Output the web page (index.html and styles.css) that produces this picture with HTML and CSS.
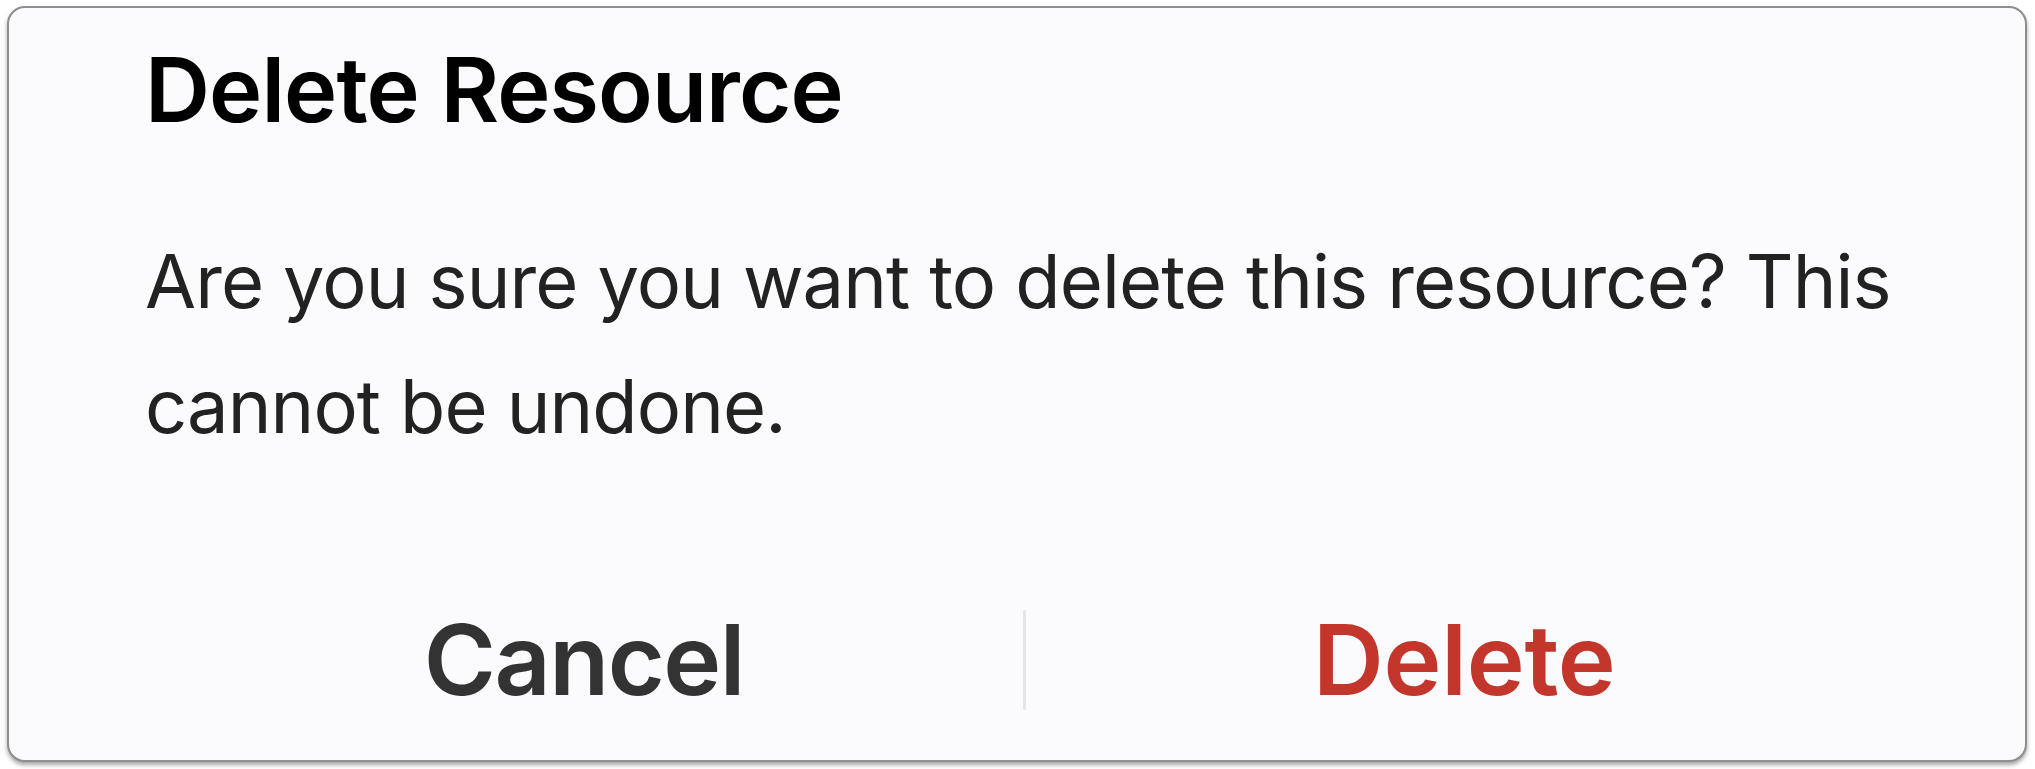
FILE: index.html
```html
<!DOCTYPE html>
<html lang="en">
<head>
    <meta charset="UTF-8">
    <meta name="viewport" content="width=device-width, initial-scale=1.0">
    <title>Delete Resource</title>
    <link rel="stylesheet" href="styles.css">
</head>
<body>
    <div class="dialog" role="alertdialog" aria-labelledby="dialogTitle">
        <h1 id="dialogTitle">Delete Resource</h1>
        <p class="message">Are you sure you want to delete this resource? This cannot be undone.</p>
        <div class="actions">
            <button type="button" class="btn-cancel">Cancel</button>
            <span class="divider"></span>
            <button type="button" class="btn-delete">Delete</button>
        </div>
    </div>
</body>
</html>
```

FILE: styles.css
```css
body {
    margin: 0;
    background-color: #ffffff;
    font-family: Inter, "Noto Sans", Arial, sans-serif;
}
.dialog {
    box-sizing: border-box;
    width: 2020px;
    height: 756px;
    margin: 6px 8px 7px 7px;
    padding: 28px 122px 0 136px;
    background-color: #fbfbfd;
    border: 2px solid #8e8e8e;
    border-radius: 18px;
    box-shadow: 0 3px 4px rgba(0,0,0,0.35);
}
h1 {
    margin: 0;
    font-size: 90px;
    line-height: 108px;
    font-weight: 600;
    letter-spacing: -0.9px;
    color: #000;
}
.message {
    margin: 75px 0 0 0;
    font-size: 74px;
    line-height: 125px;
    letter-spacing: -0.9px;
    color: #222;
}
.actions {
    display: flex;
    align-items: stretch;
    height: 100px;
    margin-top: 141px;
}
.actions button {
    flex: 1;
    background: none;
    border: none;
    padding: 0;
    font-family: inherit;
    font-size: 98px;
    line-height: 100px;
    font-weight: 600;
    letter-spacing: -1.5px;
    cursor: pointer;
}
.actions .btn-cancel {
    color: #333;
}
.actions .btn-delete {
    color: #c3362b;
    letter-spacing: -0.2px;
}
.divider {
    width: 3px;
    background-color: #e6e6e8;
}
```
